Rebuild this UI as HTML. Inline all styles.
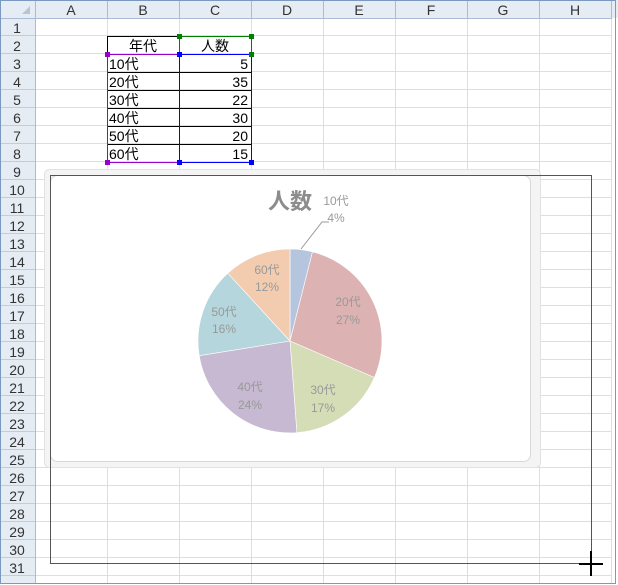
<!DOCTYPE html>
<html><head><meta charset="utf-8"><style>
body{margin:0;width:618px;height:585px;overflow:hidden;background:#fff}
svg{display:block}
text{font-family:"Liberation Sans","Noto Sans CJK JP",sans-serif}
</style></head><body>
<svg width="618" height="585" xmlns="http://www.w3.org/2000/svg">
<rect width="618" height="585" fill="#fff"/>
<g stroke="#dadfe6" stroke-width="1">
<line x1="107.5" y1="18" x2="107.5" y2="583"/><line x1="179.5" y1="18" x2="179.5" y2="583"/><line x1="251.5" y1="18" x2="251.5" y2="583"/><line x1="323.5" y1="18" x2="323.5" y2="583"/><line x1="395.5" y1="18" x2="395.5" y2="583"/><line x1="467.5" y1="18" x2="467.5" y2="583"/><line x1="539.5" y1="18" x2="539.5" y2="583"/><line x1="611.5" y1="18" x2="611.5" y2="583"/>
</g>
<g stroke="#dadfe6" id="rows"></g>
<script>
(function(){var g=document.getElementById('rows'),ns='http://www.w3.org/2000/svg';
for(var i=1;i<=31;i++){var y=18+18*i-0.5;var l=document.createElementNS(ns,'line');l.setAttribute('x1',35);l.setAttribute('x2',612);l.setAttribute('y1',y);l.setAttribute('y2',y);g.appendChild(l);}
})();
</script>
<rect x="0" y="0" width="618" height="18" fill="#e6ecf4"/>
<rect x="0" y="0" width="35" height="583" fill="#e6ecf4"/>
<g stroke="#a9bcd3">
<line x1="0" y1="18.5" x2="612" y2="18.5"/><line x1="35.5" y1="0" x2="35.5" y2="583"/>
<line x1="107.5" y1="0" x2="107.5" y2="18"/><line x1="179.5" y1="0" x2="179.5" y2="18"/><line x1="251.5" y1="0" x2="251.5" y2="18"/><line x1="323.5" y1="0" x2="323.5" y2="18"/><line x1="395.5" y1="0" x2="395.5" y2="18"/><line x1="467.5" y1="0" x2="467.5" y2="18"/><line x1="539.5" y1="0" x2="539.5" y2="18"/><line x1="611.5" y1="0" x2="611.5" y2="18"/>
</g>
<polygon points="30,6 30,14 22,14" fill="#b8c4d2"/>
<g font-size="14" fill="#333" text-anchor="middle">
<text x="71" y="15">A</text><text x="143" y="15">B</text><text x="215" y="15">C</text><text x="287" y="15">D</text><text x="359" y="15">E</text><text x="431" y="15">F</text><text x="503" y="15">G</text><text x="575" y="15">H</text>
</g>
<g id="rh" font-size="14" fill="#333" text-anchor="middle" stroke="#c0cddc"></g>
<script>
(function(){var g=document.getElementById('rh'),ns='http://www.w3.org/2000/svg';
for(var i=1;i<=31;i++){var t=document.createElementNS(ns,'text');t.setAttribute('x',17);t.setAttribute('y',18*i+15);t.setAttribute('stroke','none');t.textContent=i;g.appendChild(t);
var l=document.createElementNS(ns,'line');l.setAttribute('x1',0);l.setAttribute('x2',35);l.setAttribute('y1',18*i+17.5);l.setAttribute('y2',18*i+17.5);g.appendChild(l);}
})();
</script>
<g stroke="#000" fill="none">
<rect x="107.5" y="36.5" width="144" height="126"/>
<line x1="107" y1="72.5" x2="251" y2="72.5"/><line x1="107" y1="90.5" x2="251" y2="90.5"/><line x1="107" y1="108.5" x2="251" y2="108.5"/><line x1="107" y1="126.5" x2="251" y2="126.5"/><line x1="107" y1="144.5" x2="251" y2="144.5"/>
</g>
<rect x="179.5" y="36.5" width="72" height="18" fill="none" stroke="#008000"/>
<rect x="107.5" y="54.5" width="72" height="108" fill="none" stroke="#9900cc"/>
<rect x="179.5" y="54.5" width="72" height="108" fill="none" stroke="#0000ff"/>
<g fill="#008000"><rect x="177" y="34" width="5" height="5"/><rect x="249" y="34" width="5" height="5"/><rect x="249" y="52" width="5" height="5"/></g>
<g fill="#9900cc"><rect x="105" y="52" width="5" height="5"/><rect x="105" y="160" width="5" height="5"/></g>
<g fill="#0000ff"><rect x="177" y="52" width="5" height="5"/><rect x="177" y="160" width="5" height="5"/><rect x="249" y="160" width="5" height="5"/></g>
<g font-size="14" fill="#000">
<text x="143" y="51" text-anchor="middle">年代</text><text x="215" y="51" text-anchor="middle">人数</text>
<text x="109" y="69">10代</text><text x="109" y="87">20代</text><text x="109" y="105">30代</text><text x="109" y="123">40代</text><text x="109" y="141">50代</text><text x="109" y="159">60代</text>
<g text-anchor="end"><text x="248" y="69">5</text><text x="248" y="87">35</text><text x="248" y="105">22</text><text x="248" y="123">30</text><text x="248" y="141">20</text><text x="248" y="159">15</text></g>
</g>
<rect x="44.5" y="169.5" width="496" height="298" rx="5" fill="#f4f4f4" stroke="#e2e2e2"/>
<rect x="50.5" y="175.5" width="480" height="286" rx="7" fill="#fff" stroke="#d8d8d8"/>
<g stroke="#fff" stroke-width="0.6">
<path d="M290,341 L290,249 A92,92 0 0 1 312.5,251.8 Z" fill="#b6c5de"/>
<path d="M290,341 L312.5,251.8 A92,92 0 0 1 374.4,377.5 Z" fill="#dcb3b2"/>
<path d="M290,341 L374.4,377.5 A92,92 0 0 1 296.9,432.7 Z" fill="#d5ddb6"/>
<path d="M290,341 L296.9,432.7 A92,92 0 0 1 199.2,355.7 Z" fill="#c6b9d1"/>
<path d="M290,341 L199.2,355.7 A92,92 0 0 1 227.8,273.2 Z" fill="#b5d6dd"/>
<path d="M290,341 L227.8,273.2 A92,92 0 0 1 290,249 Z" fill="#f3ccaf"/>
</g>
<polyline points="301,249 322,222 329,222" fill="none" stroke="#999"/>
<text x="290" y="209" font-size="22" font-weight="bold" fill="#8c8c8c" text-anchor="middle">人数</text>
<g font-size="12" fill="#999" text-anchor="middle">
<text x="336" y="205">10代</text><text x="336" y="222">4%</text>
<text x="348" y="306">20代</text><text x="348" y="324">27%</text>
<text x="323" y="394">30代</text><text x="323" y="412">17%</text>
<text x="250" y="391">40代</text><text x="250" y="409">24%</text>
<text x="224" y="316">50代</text><text x="224" y="333">16%</text>
<text x="267" y="274">60代</text><text x="267" y="291">12%</text>
</g>
<rect x="50.5" y="175.5" width="541" height="388" fill="none" stroke="#555"/>
<line x1="591" y1="551" x2="591" y2="576" stroke="#000" stroke-width="2"/>
<line x1="579" y1="564" x2="603" y2="564" stroke="#000" stroke-width="2"/>
<rect x="0.5" y="0.5" width="615" height="583" fill="none" stroke="#7a98c0"/>
</svg>
</body></html>
